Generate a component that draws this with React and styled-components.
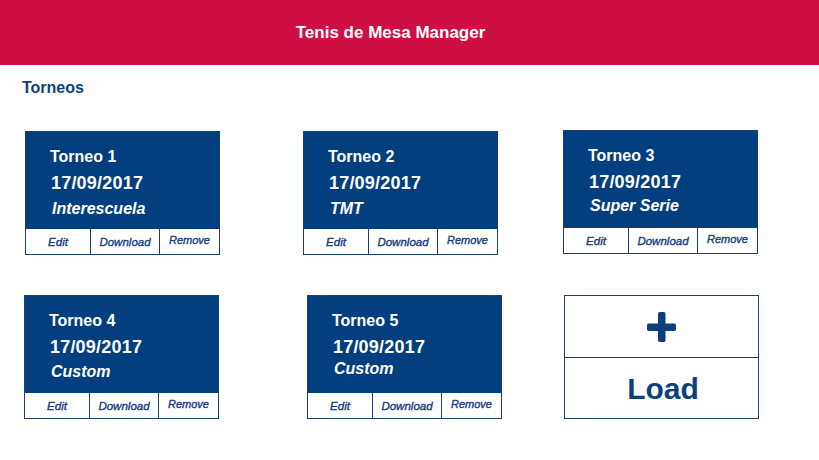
import React from "react";
import styled, { createGlobalStyle } from "styled-components";

const Global = createGlobalStyle`
  html, body { margin: 0; padding: 0; background: #ffffff; }
  body { font-family: "Liberation Sans", Arial, sans-serif; width: 819px; }
`;

const Header = styled.header`
  height: 65px;
  background: #cf0f43;
  display: flex;
  align-items: center;
  justify-content: center;
  padding-right: 38px;
`;

const AppTitle = styled.h1`
  margin: 0;
  color: #ffffff;
  font-size: 17px;
  font-weight: 700;
  line-height: 20px;
`;

const Main = styled.main`
  padding: 14px 0 0 24px;
`;

const SectionTitle = styled.h2`
  margin: 0 0 0 -2px;
  color: #0d3f7c;
  font-size: 16px;
  font-weight: 700;
  line-height: 18px;
`;

const Grid = styled.div`
  margin-top: 34px;
  display: grid;
  grid-template-columns: 279px 260px 195px;
  row-gap: 40px;
`;

const Card = styled.div`
  box-sizing: border-box;
  width: 195px;
  height: 124px;
  border: 1px solid #1c3f6e;
  display: flex;
  flex-direction: column;
  margin-left: ${(p) => p.$dx || 0}px;
  margin-top: ${(p) => p.$dy || 0}px;
`;

const Info = styled.div`
  height: 97px;
  background: #033f7e;
  padding: 12px 0 0 24px;
  box-sizing: border-box;
  color: #ffffff;
  font-weight: 700;
`;

const Name = styled.div`
  font-size: 16px;
  line-height: 26px;
`;

const DateLine = styled.div`
  font-size: 18px;
  line-height: 27px;
  margin-left: 1px;
  letter-spacing: 0.2px;
`;

const Kind = styled.div`
  font-size: 16px;
  line-height: 24px;
  font-style: italic;
  margin-left: 2px;
  margin-top: ${(p) => p.$shift || 0}px;
  white-space: nowrap;
`;

const Actions = styled.div`
  flex: 1;
  display: grid;
  grid-template-columns: 64px 69px 1fr;
  background: #ffffff;
`;

const Action = styled.div`
  display: flex;
  align-items: center;
  justify-content: center;
  color: #12397a;
  font-style: italic;
  font-size: ${(p) => p.$size || 11.5}px;
  font-weight: ${(p) => (p.$bold ? 700 : 400)};
  -webkit-text-stroke: 0.35px #12397a;
  padding-bottom: ${(p) => p.$raise || 0}px;
  & + & { border-left: 1px solid #1c3f6e; }
`;

const LoadCard = styled(Card)`
  cursor: pointer;
`;

const LoadHalf = styled.div`
  height: 61px;
  display: flex;
  align-items: center;
  justify-content: center;
  color: #0d3f7c;
  font-weight: 700;
  font-size: 30px;
  & + & { border-top: 1px solid #1c3f6e; height: 60px; padding: 3px 0 0 3px; box-sizing: border-box; }
`;

const PlusIcon = () => (
  <svg width="30" height="30" viewBox="0 0 30 30" aria-hidden="true">
    <rect x="11" y="0" width="7.5" height="30" rx="1.8" fill="#0d3f7c" />
    <rect x="0" y="11.5" width="29" height="7.5" rx="1.8" fill="#0d3f7c" />
  </svg>
);

const tournaments = [
  { name: "Torneo 1", kind: "Interescuela", dx: 1, dy: 0, shift: 0 },
  { name: "Torneo 2", kind: "TMT", dx: 0, dy: 0, shift: 0 },
  { name: "Torneo 3", kind: "Super Serie", dx: 0, dy: -1, shift: -2 },
  { name: "Torneo 4", kind: "Custom", dx: 0, dy: 0, shift: -1 },
  { name: "Torneo 5", kind: "Custom", dx: 4, dy: 0, shift: -4 },
];

export default function App() {
  return (
    <>
      <Global />
      <Header>
        <AppTitle>Tenis de Mesa Manager</AppTitle>
      </Header>
      <Main>
        <SectionTitle>Torneos</SectionTitle>
        <Grid>
          {tournaments.map((t) => (
            <Card key={t.name} $dx={t.dx} $dy={t.dy}>
              <Info>
                <Name>{t.name}</Name>
                <DateLine>17/09/2017</DateLine>
                <Kind $shift={t.shift}>{t.kind}</Kind>
              </Info>
              <Actions>
                <Action>Edit</Action>
                <Action>Download</Action>
                <Action $size={11} $raise={3}>Remove</Action>
              </Actions>
            </Card>
          ))}
          <LoadCard $dx={1}>
            <LoadHalf>
              <PlusIcon />
            </LoadHalf>
            <LoadHalf>Load</LoadHalf>
          </LoadCard>
        </Grid>
      </Main>
    </>
  );
}
